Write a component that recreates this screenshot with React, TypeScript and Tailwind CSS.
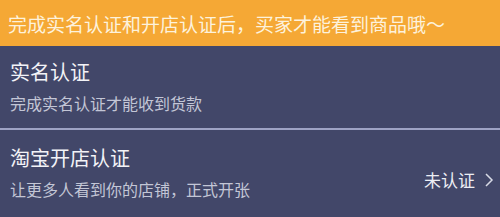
export default function App() {
  const font = { fontFamily: '"Noto Sans CJK SC", "Noto Sans", sans-serif' };
  return (
    <div className="w-[500px] h-[217px] bg-[#424769] overflow-hidden" style={font}>
      <div className="h-[46px] bg-[#f5a835] flex items-center pl-[8px] text-[19px] text-[#fdf2dc] leading-none">
        完成实名认证和开店认证后，买家才能看到商品哦～
      </div>
      <div className="h-[84px] px-[10px] pt-[12px] border-b-2 border-[#9ea3c4]">
        <p className="text-[20px] leading-[28px] text-[#f3f3f7]">实名认证</p>
        <p className="mt-[6px] text-[16px] leading-[22px] text-[#c3c6d6]">完成实名认证才能收到货款</p>
      </div>
      <div className="h-[85px] pl-[10px] pr-[6px] pt-[14px] flex items-start justify-between">
        <div>
          <p className="text-[20px] leading-[28px] text-[#f3f3f7]">淘宝开店认证</p>
          <p className="mt-[6px] text-[16px] leading-[22px] text-[#c3c6d6]">让更多人看到你的店铺，正式开张</p>
        </div>
        <div className="mt-[23px] flex items-center gap-[9px] text-[17px] text-[#eceef4]">
          <span>未认证</span>
          <svg width="10" height="16" viewBox="0 0 10 16" fill="none">
            <path d="M2 2l6 6-6 6" stroke="#d8dae6" strokeWidth="1.5" />
          </svg>
        </div>
      </div>
    </div>
  );
}
